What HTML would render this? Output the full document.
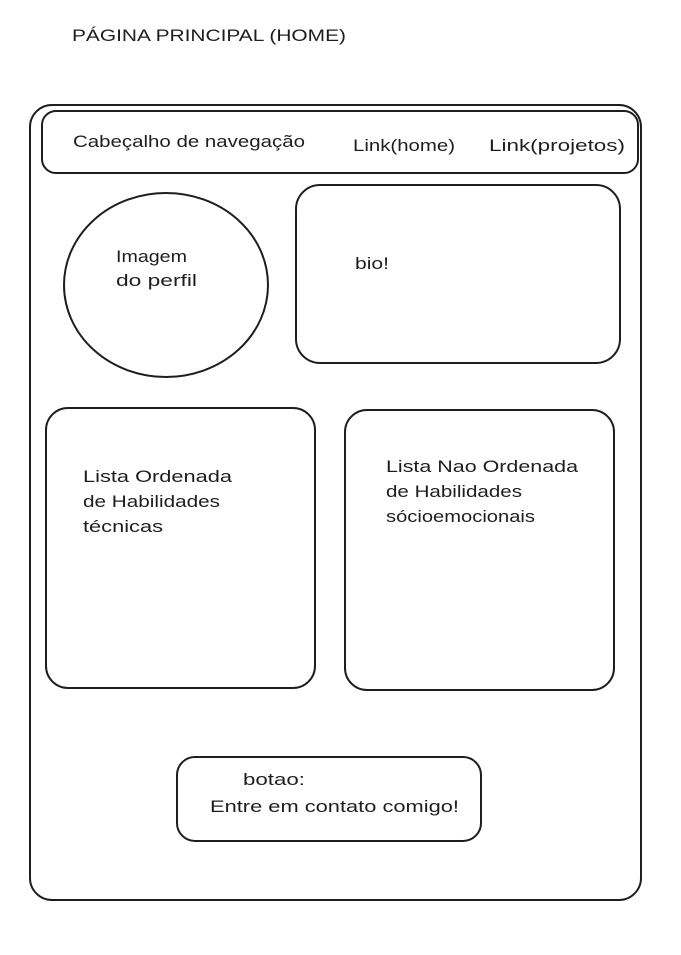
<!DOCTYPE html>
<html><head><meta charset="utf-8"><style>
html,body{margin:0;padding:0;background:#fff;width:681px;height:955px;overflow:hidden}
svg text{font-family:"Liberation Sans","DejaVu Sans",sans-serif;fill:#1e1e1e;font-size:17px}
</style></head><body>
<svg width="681" height="955" viewBox="0 0 681 955" xmlns="http://www.w3.org/2000/svg">
<g fill="none" stroke="#1e1e1e" stroke-width="2">
<rect x="30" y="105" width="611" height="795" rx="22"/>
<rect x="42" y="111" width="596" height="62" rx="14"/>
<ellipse cx="166" cy="285" rx="102" ry="92"/>
<rect x="296" y="185" width="324" height="178" rx="24"/>
<rect x="46" y="408" width="269" height="280" rx="22"/>
<rect x="345" y="410" width="269" height="280" rx="22"/>
<rect x="177" y="757" width="304" height="84" rx="18"/>
</g>
<g lengthAdjust="spacingAndGlyphs">
<text x="72" y="41" font-size="18" textLength="274" lengthAdjust="spacingAndGlyphs">PÁGINA PRINCIPAL (HOME)</text>
<text x="73" y="147" textLength="232" lengthAdjust="spacingAndGlyphs">Cabeçalho de navegação</text>
<text x="353" y="151" textLength="102" lengthAdjust="spacingAndGlyphs">Link(home)</text>
<text x="489" y="151" textLength="136" lengthAdjust="spacingAndGlyphs">Link(projetos)</text>
<text x="116" y="262" textLength="71" lengthAdjust="spacingAndGlyphs">Imagem</text>
<text x="116" y="286" textLength="81" lengthAdjust="spacingAndGlyphs">do perfil</text>
<text x="355" y="269" textLength="34" lengthAdjust="spacingAndGlyphs">bio!</text>
<text x="83" y="482" textLength="149" lengthAdjust="spacingAndGlyphs">Lista Ordenada</text>
<text x="83" y="507" textLength="137" lengthAdjust="spacingAndGlyphs">de Habilidades</text>
<text x="83" y="532" textLength="80" lengthAdjust="spacingAndGlyphs">técnicas</text>
<text x="386" y="472" textLength="192" lengthAdjust="spacingAndGlyphs">Lista Nao Ordenada</text>
<text x="386" y="497" textLength="136" lengthAdjust="spacingAndGlyphs">de Habilidades</text>
<text x="386" y="522" textLength="149" lengthAdjust="spacingAndGlyphs">sócioemocionais</text>
<text x="243" y="785" textLength="62" lengthAdjust="spacingAndGlyphs">botao:</text>
<text x="210" y="812" textLength="249" lengthAdjust="spacingAndGlyphs">Entre em contato comigo!</text>
</g>
</svg>
</body></html>
